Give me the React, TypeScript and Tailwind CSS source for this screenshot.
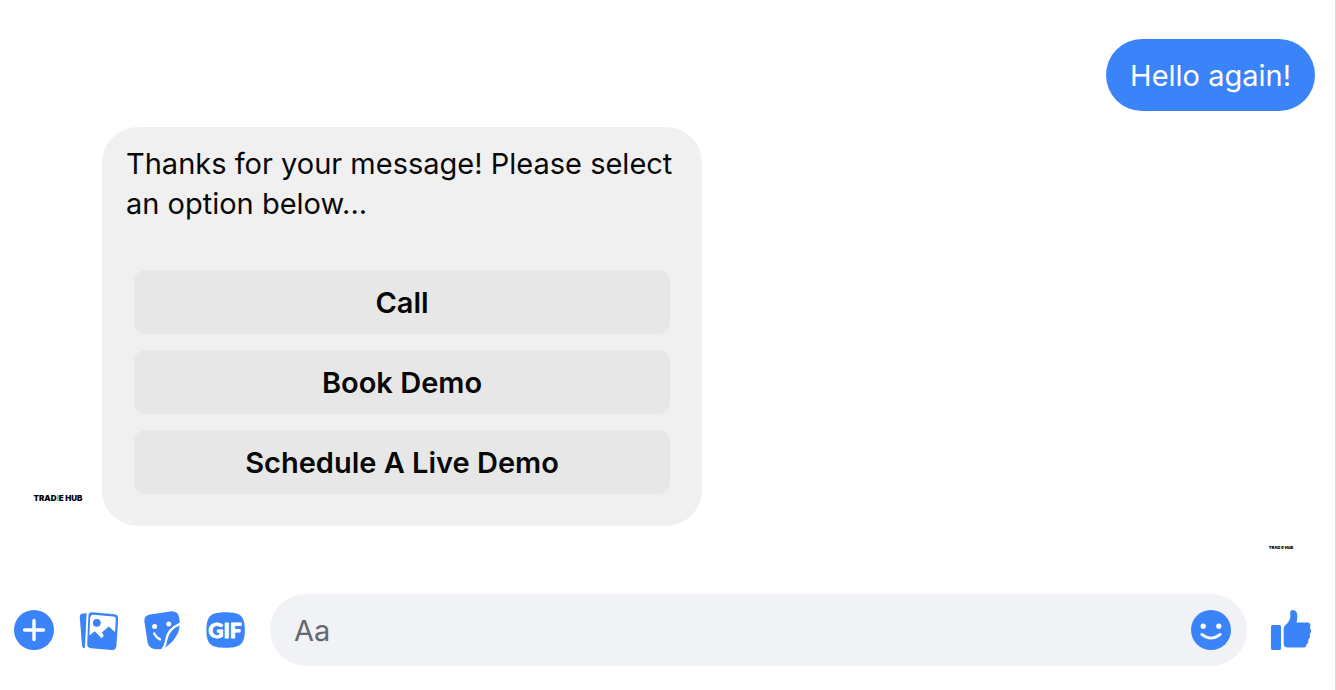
import React from "react";

const options = ["Call", "Book Demo", "Schedule A Live Demo"];

const PlusIcon = () => (
  <svg viewBox="0 0 40 40" className="size-10" fill="currentColor" aria-hidden="true">
    <circle cx="20" cy="20" r="20" />
    <path d="M20 10.5v19M10.5 20h19" stroke="white" strokeWidth="3.4" strokeLinecap="round" />
  </svg>
);

const PhotosIcon = () => (
  <svg viewBox="-1 0 40 40" className="size-10" fill="currentColor" aria-hidden="true">
    <path d="M3.5 3.4 7.6 3.2 6 36.5Q5.8 38.4 5 38.2 3.3 38 3 35.5L.8 7.2Q.5 3.8 3.5 3.4Z" />
    <path d="M13 2.2 35.4 4.2Q39.6 4.8 39.2 9L37.4 36Q36.8 40.4 33 40L12 38.2Q8 37.6 8.2 33.6L9.4 5.8Q9.8 2 13 2.2Z" />
    <path
      fill="white"
      d="M14 4.7 34.6 6.5Q37 6.8 36.8 9.2L36 22 29.8 16.4 22.8 22.4 24.8 25.4 22.6 28.2 15.8 21.2 10.4 25.6 11.2 7.2Q11.5 4.5 14 4.7Z"
    />
    <circle cx="17.8" cy="12.8" r="3.9" />
  </svg>
);

const StickerIcon = () => (
  <svg viewBox="0 0 40 40" className="size-10" fill="currentColor" aria-hidden="true">
    <path d="M8 4.4 28 1.4Q36.4.4 37.4 8.4 38.6 18.6 34.6 25.6 29.6 34.4 21.2 38.4 14 40.4 9.4 38 6.2 36.2 5.6 32.6L2.4 11.4Q1.8 5.4 8 4.4Z" />
    <path
      d="M39 13.4C29.4 17.6 25 22.4 24.2 30 23.8 34 23 36.6 20.4 39.6"
      fill="none"
      stroke="white"
      strokeWidth="2.3"
    />
    <path d="M12.2 23.4Q14.2 27.6 18 29.4" fill="none" stroke="white" strokeWidth="2.3" strokeLinecap="round" />
    <circle cx="12.6" cy="16.4" r="2.5" fill="white" />
    <circle cx="26.7" cy="14" r="2.5" fill="white" />
  </svg>
);

const GifIcon = () => (
  <svg viewBox="0 0 40 40" className="size-10" fill="currentColor" aria-hidden="true">
    <path d="M19.6 2.2C34 2.2 38.8 5.6 38.8 20S34 37.8 19.6 37.8.4 34.4.4 20 5.2 2.2 19.6 2.2Z" />
    <text
      x="19"
      y="28"
      textAnchor="middle"
      fill="white"
      stroke="white"
      strokeWidth="0.8"
      strokeLinejoin="round"
      className="font-['Lato',sans-serif] text-[21px] font-black"
    >
      GIF
    </text>
  </svg>
);

const SmileIcon = () => (
  <svg viewBox="0 0 40 40" className="size-10" fill="currentColor" aria-hidden="true">
    <circle cx="20" cy="20" r="20" />
    <circle cx="12.2" cy="16.2" r="2.6" fill="white" />
    <circle cx="27.8" cy="16.2" r="2.6" fill="white" />
    <path d="M10.8 24.4Q20 31.8 29.2 24.4" fill="none" stroke="white" strokeWidth="2.8" strokeLinecap="round" />
  </svg>
);

const LikeIcon = () => (
  <svg viewBox="0 0 40 40" className="size-10" fill="currentColor" aria-hidden="true">
    <rect y="15" width="10" height="25" rx="1.6" />
    <path d="M12.7 18.6Q12.7 16.6 14.4 15 18.8 11.2 19.3 7.2L19.2 2.2Q19.3 0 21.6 0 26.6.6 26.4 6.6L25.6 12.4H36.4Q39.4 12.6 39.4 15.4 39.4 17 38.8 18 40.2 19.4 40 21.4 39.8 23.2 38.6 24.2 39.4 25.8 38.8 27.6 38.2 29.2 37.2 29.8 37.6 31.6 36.8 33 36.2 34 35.6 34.4 35.4 37.4 32 37.6H16.6Q12.7 37.4 12.7 33.4Z" />
  </svg>
);

const Logo = ({ className }: { className: string }) => (
  <span className={`font-black whitespace-nowrap text-black ${className}`}>
    TRAD<span className="text-[#7fc07f]">I</span>E HUB
  </span>
);

export default function App() {
  return (
    <main className="flex min-h-screen flex-col border-r border-[#dcdcdc] bg-white font-['Inter','Liberation_Sans',sans-serif] text-[29px] leading-10 text-[#080809]">
      <section className="flex-1 pt-[39px]" aria-label="Conversation">
        <div className="mr-5 flex justify-end">
          <p className="rounded-full bg-[#3a83f8] px-6 pt-[17px] pb-[15px] text-white">Hello again!</p>
        </div>

        <div className="mt-4 ml-[30px] flex items-end gap-4">
          <div className="flex size-14 items-center justify-center">
            <Logo className="text-[8px] leading-none" />
          </div>
          <div className="w-full max-w-[600px] rounded-[36px] bg-[#f0f0f0] pt-[17px] pb-8">
            <p className="px-6">Thanks for your message! Please select an option below...</p>
            <div className="mx-8 mt-[46px] flex flex-col gap-4">
              {options.map((option) => (
                <button
                  key={option}
                  type="button"
                  className="h-16 rounded-xl bg-[#e7e7e7] pt-0.5 font-semibold"
                >
                  {option}
                </button>
              ))}
            </div>
          </div>
        </div>

        <div className="mt-2 mr-10 flex justify-end">
          <div className="flex size-7 items-center justify-center">
            <Logo className="text-[4px] leading-none" />
          </div>
        </div>
      </section>

      <form
        className="flex items-center gap-6 pt-4 pr-6 pb-6 pl-3.5 text-[#3a83f8]"
        onSubmit={(e) => e.preventDefault()}
      >
        <div className="flex gap-6">
          <button type="button" aria-label="More actions">
            <PlusIcon />
          </button>
          <button type="button" aria-label="Attach a photo">
            <PhotosIcon />
          </button>
          <button type="button" aria-label="Choose a sticker">
            <StickerIcon />
          </button>
          <button type="button" aria-label="Choose a GIF">
            <GifIcon />
          </button>
        </div>
        <div className="flex h-[72px] flex-1 items-center rounded-full bg-[#f0f2f5] pr-4 pl-6">
          <input
            type="text"
            aria-label="Message"
            placeholder="Aa"
            className="min-w-0 flex-1 bg-transparent pt-0.5 text-[#080809] outline-none placeholder:text-[#65686c]"
          />
          <button type="button" aria-label="Choose an emoji">
            <SmileIcon />
          </button>
        </div>
        <button type="button" aria-label="Send a like">
          <LikeIcon />
        </button>
      </form>
    </main>
  );
}
